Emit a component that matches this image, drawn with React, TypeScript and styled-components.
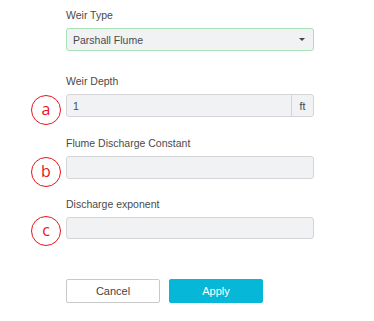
import styled, { createGlobalStyle } from "styled-components";

const GlobalStyle = createGlobalStyle`
  html, body {
    margin: 0;
    padding: 0;
    background: #ffffff;
    font-family: "Liberation Sans", Arial, Helvetica, sans-serif;
  }
`;

const Page = styled.div`
  padding: 8px 0 0 31px;
  width: 374px;
  height: 321px;
  box-sizing: border-box;
`;

const Field = styled.div<{ $top?: number; $h?: number }>`
  display: grid;
  grid-template-columns: 30px 248px;
  grid-template-rows: 14px ${(p) => p.$h ?? 23}px;
  column-gap: 5px;
  row-gap: 6px;
  margin-top: ${(p) => p.$top ?? 0}px;
`;

const Label = styled.div`
  grid-column: 2;
  grid-row: 1;
  font-size: 10.5px;
  line-height: 14px;
  color: #4a4a4a;
`;

const Badge = styled.div<{ $shift?: number }>`
  grid-column: 1;
  grid-row: 2;
  width: 30px;
  height: 30px;
  box-sizing: border-box;
  border: 1.7px solid #e8141c;
  border-radius: 50%;
  color: #e8141c;
  font-family: "Open Sans", "Liberation Sans", sans-serif;
  font-size: 16px;
  font-weight: 400;
  display: flex;
  align-items: center;
  justify-content: center;
  align-self: center;
  transform: translateY(${(p) => p.$shift ?? 4}px);
  line-height: 1;
  padding-bottom: 2px;
`;

const Control = styled.div<{ $focus?: boolean }>`
  grid-column: 2;
  grid-row: 2;
  box-sizing: border-box;
  background: #f1f2f4;
  border: 1px solid ${(p) => (p.$focus ? "#a9e2b4" : "#d3d5d9")};
  border-radius: 3px;
  display: flex;
  align-items: center;
  font-size: 10.5px;
  color: #4a4a4a;
`;

const Value = styled.span`
  flex: 1;
  padding-left: 6px;
`;

const Caret = styled.span`
  width: 0;
  height: 0;
  border-left: 3px solid transparent;
  border-right: 3px solid transparent;
  border-top: 3px solid #444;
  margin-right: 8px;
`;

const Addon = styled.span`
  width: 21px;
  height: 100%;
  border-left: 1px solid #d3d5d9;
  display: flex;
  align-items: center;
  justify-content: center;
  color: #444;
  font-size: 10.5px;
`;

const Actions = styled.div`
  display: flex;
  gap: 9px;
  margin: 40px 0 0 35px;
`;

const Button = styled.button<{ $primary?: boolean }>`
  width: 94px;
  height: 24px;
  box-sizing: border-box;
  border-radius: 2px;
  font-family: "Liberation Sans", Arial, Helvetica, sans-serif;
  font-size: 11px;
  padding: 0;
  background: ${(p) => (p.$primary ? "#06b7d8" : "#ffffff")};
  color: ${(p) => (p.$primary ? "#ffffff" : "#444")};
  border: 1px solid ${(p) => (p.$primary ? "#06b7d8" : "#c9c9c9")};
`;

const App = () => (
  <>
    <GlobalStyle />
    <Page>
      <Field>
        <Label>Weir Type</Label>
        <Control $focus>
          <Value>Parshall Flume</Value>
          <Caret />
        </Control>
      </Field>

      <Field $top={23}>
        <Label>Weir Depth</Label>
        <Badge>a</Badge>
        <Control>
          <Value>1</Value>
          <Addon>ft</Addon>
        </Control>
      </Field>

      <Field $top={19}>
        <Label>Flume Discharge Constant</Label>
        <Badge>b</Badge>
        <Control />
      </Field>

      <Field $top={18} $h={22}>
        <Label>Discharge exponent</Label>
        <Badge $shift={3}>c</Badge>
        <Control />
      </Field>

      <Actions>
        <Button>Cancel</Button>
        <Button $primary>Apply</Button>
      </Actions>
    </Page>
  </>
);

export default App;
